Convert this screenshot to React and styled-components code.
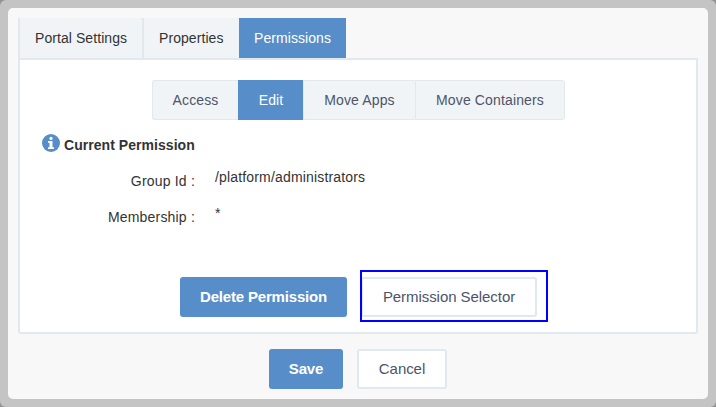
import React from "react";
import styled, { createGlobalStyle, css } from "styled-components";

const Global = createGlobalStyle`
  *, *::before, *::after { box-sizing: border-box; }
  body { margin: 0; background: #929292; }
`;

const Backdrop = styled.div`
  width: 716px;
  height: 407px;
  padding: 8px;
  border-radius: 6px;
  background: #c4c4c4;
  font-family: "Liberation Sans", Arial, sans-serif;
  font-size: 14px;
  line-height: 20px;
  color: #333;
`;

const Dialog = styled.div`
  height: 391px;
  padding: 10px;
  background: #f8f8f8;
  border-radius: 5px;
`;

const Tabs = styled.div`
  display: flex;
  height: 40px;
`;

const Tab = styled.div`
  width: ${(p) => p.$width}px;
  padding: 10px 0 0 15px;
  letter-spacing: 0.07px;
  background: ${(p) => (p.$active ? "#578dc9" : "#f0f4f7")};
  color: ${(p) => (p.$active ? "#fff" : "#333")};
  border-left: ${(p) => (p.$active ? 0 : 2)}px solid #e1e8ee;
`;

const Panel = styled.div`
  height: 276px;
  border: 2px solid #e1e8ee;
  background: #fff;
  padding-top: 20px;
  border-radius: 0 0 3px 3px;
`;

const Segments = styled.div`
  display: flex;
  width: 413px;
  height: 40px;
  margin-left: 132px;
`;

const Segment = styled.div`
  width: ${(p) => p.$width}px;
  padding-top: 9px;
  text-align: center;
  letter-spacing: 0.14px;
  border: 1px solid ${(p) => (p.$active ? "#578dc9" : "#e1e8ee")};
  border-right-width: 0;
  background: ${(p) => (p.$active ? "#578dc9" : "#f0f4f7")};
  color: ${(p) => (p.$active ? "#fff" : "#4d5469")};
  &:first-child { border-radius: 3px 0 0 3px; }
  &:last-child { border-right-width: 1px; border-radius: 0 3px 3px 0; }
`;

const Heading = styled.div`
  display: flex;
  gap: 4px;
  margin: 13px 0 0 22px;
  font-weight: bold;
  letter-spacing: 0.05px;
  line-height: 24px;
`;

const InfoSvg = styled.svg`
  display: block;
  margin-top: 1px;
`;

const Field = styled.div`
  display: flex;
  height: 36px;
`;

const Fields = styled.div`
  margin-top: 10px;
`;

const Label = styled.div`
  width: 175px;
  padding-top: 4px;
  text-align: right;
  letter-spacing: 0.19px;
`;

const Value = styled.div`
  margin-left: 20px;
  letter-spacing: 0.165px;
`;

const Actions = styled.div`
  display: flex;
  margin: 38px 0 0 160px;
`;

const Highlight = styled.div`
  position: relative;
  width: 188px;
  height: 52px;
  margin: -7px 0 0 13px;
  padding: 7px 0 0 1px;
  &::after {
    content: "";
    position: absolute;
    inset: 0;
    border: 2px solid #0000fe;
    pointer-events: none;
  }
`;

const Button = styled.button`
  width: ${(p) => p.$width}px;
  height: 40px;
  padding: 0;
  display: block;
  border-radius: 3px;
  font: 15px/20px "Liberation Sans", Arial, sans-serif;
  ${(p) =>
    p.$primary
      ? css`background: #578dc9; border: 0; color: #fff; font-weight: bold; letter-spacing: -0.18px;`
      : css`background: #fff; border: 2px solid #e1e8ee; color: #4d5469; letter-spacing: -0.06px;`}
`;

const Footer = styled.div`
  display: flex;
  gap: 14px;
  margin: 15px 0 0 251px;
`;

function InfoIcon() {
  return (
    <InfoSvg width="18" height="18" viewBox="0 0 18 18">
      <circle cx="9" cy="9" r="9" fill="#578dc9" />
      <circle cx="9" cy="4.4" r="1.6" fill="#fff" />
      <path d="M6 7h4.5v6.2H12V15H6v-1.8h1.5V8.8H6z" fill="#fff" />
    </InfoSvg>
  );
}

export default function App() {
  return (
    <Backdrop>
      <Global />
      <Dialog>
        <Tabs>
          <Tab $width={124}>Portal Settings</Tab>
          <Tab $width={97}>Properties</Tab>
          <Tab $width={107} $active>Permissions</Tab>
        </Tabs>
        <Panel>
          <Segments>
            <Segment $width={86}>Access</Segment>
            <Segment $width={65} $active>Edit</Segment>
            <Segment $width={112}>Move Apps</Segment>
            <Segment $width={150}>Move Containers</Segment>
          </Segments>
          <Heading><InfoIcon />Current Permission</Heading>
          <Fields>
            <Field><Label>Group Id :</Label><Value>/platform/administrators</Value></Field>
            <Field><Label>Membership :</Label><Value>*</Value></Field>
          </Fields>
          <Actions>
            <Button $primary $width={167}>Delete Permission</Button>
            <Highlight><Button $width={176}>Permission Selector</Button></Highlight>
          </Actions>
        </Panel>
        <Footer>
          <Button $primary $width={74}>Save</Button>
          <Button $width={90}>Cancel</Button>
        </Footer>
      </Dialog>
    </Backdrop>
  );
}
